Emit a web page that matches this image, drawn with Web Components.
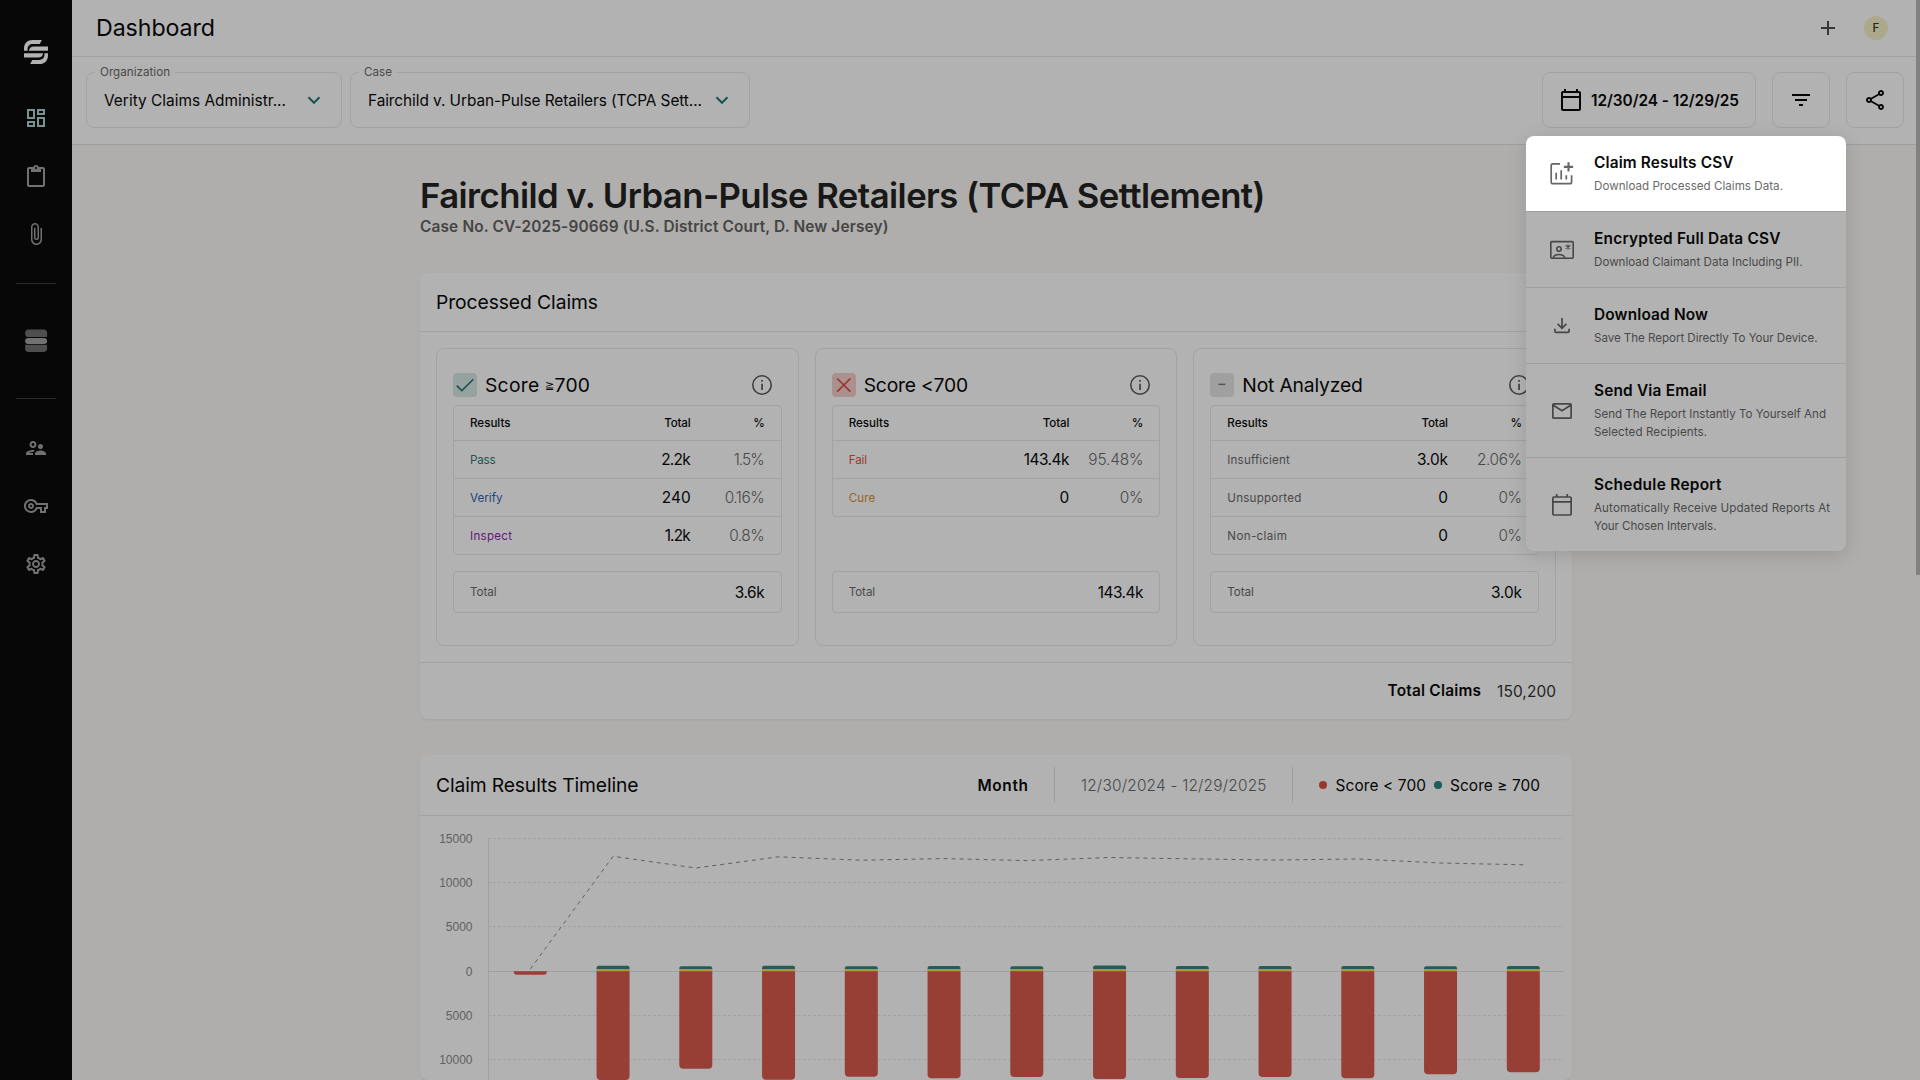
<!DOCTYPE html>
<html lang="en">
<head>
<meta charset="utf-8">
<title>Dashboard</title>
<style>
  html, body { margin: 0; height: 100%; }
  body {
    width: 1920px;
    height: 1080px;
    overflow: hidden;
    font-family: Inter, "Open Sans", sans-serif;
    font-size: 15.4px;
    color: #0a0a0a;
    background: #fbf9f6;
  }
</style>
</head>
<body>
<dash-app></dash-app>

<script>
const ICONS = {
  logo: '<path d="M17.8 0H8.6C3.4 0 0 3.4 0 8.600v2.100h3.600V9.400C3.600 6 5.600 4.100 9 4.100h6.800z"/><path d="M24 6.400H9.700C7 6.400 5.200 8 4.900 10.700H24z"/><path d="M6.200 24h9.200c5.200 0 8.600-3.400 8.600-8.600v-2.100h-3.600v1.300c0 3.400-2 5.300-5.400 5.300H8.200z"/><path d="M0 17.600h14.300c2.700 0 4.500-1.600 4.800-4.300H0z"/>',
  dashboard: '<path d="M19 5v2h-4V5h4M9 5v6H5V5h4m10 8v6h-4v-6h4M9 17v2H5v-2h4M21 3h-8v6h8V3zM11 3H3v10h8V3zm10 8h-8v10h8V11zm-10 4H3v6h8v-6z"/>',
  clipboard: '<path transform="translate(0 1)" d="M19 2h-4.180C14.400.84 13.300 0 12 0S9.600.84 9.180 2H5c-1.100 0-2 .9-2 2v16c0 1.100.9 2 2 2h14c1.100 0 2-.9 2-2V4c0-1.100-.9-2-2-2zm-7 0c.55 0 1 .45 1 1s-.45 1-1 1-1-.45-1-1 .45-1 1-1zm7 18H5V4h2v3h10V4h2v16z"/>',
  clip: '<path d="M16.500 6v11.500c0 2.210-1.790 4-4 4s-4-1.790-4-4V5a2.500 2.500 0 0 1 5 0v10.500c0 .55-.45 1-1 1s-1-.45-1-1V6H10v9.500a2.500 2.500 0 0 0 5 0V5c0-2.210-1.790-4-4-4S7 2.790 7 5v12.500c0 3.040 2.460 5.500 5.500 5.500s5.500-2.460 5.500-5.500V6h-1.500z"/>',
  stack: '<g transform="translate(.6 .1)"><g opacity=".68"><path d="M4 .5h15q3.500 0 3.500 3.500v4H4Q.5 8 .5 4.300.5.500 4 .500z"/><path d="M.5 15.700h22v3.300q0 4-3.500 4H4q-3.500 0-3.500-4z"/></g><rect x=".5" y="8.800" width="22" height="6.200" rx="3"/></g>',
  people: '<path d="M9 12c1.930 0 3.500-1.570 3.500-3.500S10.930 5 9 5 5.500 6.570 5.500 8.500 7.070 12 9 12zm0-5c.83 0 1.500.67 1.500 1.500S9.830 10 9 10s-1.500-.67-1.500-1.500S8.170 7 9 7zm.05 10H4.770c.99-.5 2.700-1 4.230-1 .11 0 .23.010.34.010.34-.73.93-1.330 1.640-1.810-.73-.13-1.420-.2-1.980-.2-2.340 0-7 1.170-7 3.500V19h7v-1.500c0-.17.020-.34.050-.5zm7.450-2.500c-1.840 0-5.500 1.010-5.500 3V19h11v-1.500c0-1.990-3.660-3-5.500-3zm1.210-1.820c.76-.43 1.290-1.240 1.290-2.180C19 9.120 17.880 8 16.500 8S14 9.120 14 10.500c0 .94.53 1.750 1.290 2.180.36.2.77.32 1.210.32s.85-.12 1.210-.32z"/>',
  key: '<path d="M22 19h-6v-4h-2.680c-1.140 2.420-3.600 4-6.320 4-3.860 0-7-3.140-7-7s3.140-7 7-7c2.720 0 5.170 1.580 6.320 4H24v6h-2v4zm-4-2h2v-4h2v-2H11.940l-.23-.67C11.010 8.340 9.110 7 7 7c-2.760 0-5 2.240-5 5s2.240 5 5 5c2.110 0 4.010-1.340 4.710-3.330l.23-.67H18v4zM7 15c-1.650 0-3-1.350-3-3s1.350-3 3-3 3 1.350 3 3-1.350 3-3 3zm0-4c-.55 0-1 .45-1 1s.45 1 1 1 1-.45 1-1-.45-1-1-1z"/>',
  gear: '<path d="M19.430 12.980c.04-.32.07-.64.07-.98 0-.34-.03-.66-.07-.98l2.110-1.650c.19-.15.24-.42.12-.64l-2-3.460c-.09-.16-.26-.25-.44-.25-.06 0-.12.010-.17.030l-2.490 1c-.52-.4-1.080-.73-1.690-.98l-.38-2.650C14.460 2.180 14.250 2 14 2h-4c-.25 0-.46.18-.49.42l-.38 2.650c-.61.25-1.170.59-1.690.98l-2.490-1c-.06-.02-.12-.03-.18-.03-.17 0-.34.09-.43.25l-2 3.460c-.13.22-.07.49.12.64l2.110 1.650c-.04.32-.07.65-.07.98 0 .33.03.66.07.98l-2.110 1.650c-.19.15-.24.42-.12.64l2 3.460c.09.16.26.25.44.25.06 0 .12-.01.17-.03l2.490-1c.52.4 1.080.73 1.690.98l.38 2.650c.03.24.24.42.49.42h4c.25 0 .46-.18.49-.42l.38-2.650c.61-.25 1.170-.59 1.690-.98l2.490 1c.06.02.12.03.18.03.17 0 .34-.09.43-.25l2-3.460c.12-.22.07-.49-.12-.64l-2.110-1.650zm-1.980-1.710c.04.31.05.52.05.73 0 .21-.02.43-.05.73l-.14 1.130.89.7 1.080.84-.7 1.210-1.270-.51-1.040-.42-.9.68c-.43.32-.84.56-1.250.73l-1.060.43-.16 1.130-.2 1.350h-1.400l-.19-1.350-.16-1.130-1.060-.43c-.43-.18-.83-.41-1.230-.71l-.91-.7-1.060.43-1.270.51-.7-1.210 1.080-.84.89-.7-.14-1.130c-.03-.31-.05-.54-.05-.74s.02-.43.05-.73l.14-1.130-.89-.7-1.080-.84.7-1.210 1.270.51 1.040.42.9-.68c.43-.32.84-.56 1.250-.73l1.060-.43.16-1.130.2-1.350h1.390l.19 1.350.16 1.130 1.060.43c.43.18.83.41 1.230.71l.91.7 1.060-.43 1.270-.51.7 1.210-1.070.85-.89.7.14 1.130zM12 8c-2.210 0-4 1.790-4 4s1.790 4 4 4 4-1.790 4-4-1.790-4-4-4zm0 6c-1.100 0-2-.9-2-2s.9-2 2-2 2 .9 2 2-.9 2-2 2z"/>',
  calendar: '<path d="M20 3h-1V1h-2v2H7V1H5v2H4c-1.100 0-2 .9-2 2v16c0 1.100.9 2 2 2h16c1.100 0 2-.9 2-2V5c0-1.100-.9-2-2-2zm0 18H4V10h16v11zm0-13H4V5h16v3z"/>',
  schedule: '<path fill="none" stroke="currentColor" stroke-width="1.700" d="M4 4h16q1.150 0 1.150 1.150v15.700q0 1.150-1.150 1.150H4q-1.150 0-1.150-1.150V5.150Q2.850 4 4 4zM2.850 8.900h18.300M6.700 1v3M17.300 1v3"/>',
  filter: '<path d="M10 18h4v-2h-4v2zM3 6v2h18V6H3zm3 7h12v-2H6v2z"/>',
  share: '<path d="M18 16.080c-.76 0-1.440.3-1.960.77L8.910 12.700c.05-.23.09-.46.09-.7s-.04-.47-.09-.7l7.050-4.110c.54.5 1.250.81 2.040.81 1.660 0 3-1.340 3-3s-1.340-3-3-3-3 1.340-3 3c0 .24.04.47.09.7L8.040 9.810C7.500 9.310 6.790 9 6 9c-1.660 0-3 1.340-3 3s1.340 3 3 3c.79 0 1.500-.31 2.040-.81l7.120 4.160c-.05.21-.08.43-.08.65 0 1.610 1.310 2.920 2.920 2.920s2.920-1.310 2.920-2.920-1.310-2.920-2.920-2.920zM18 4c.55 0 1 .45 1 1s-.45 1-1 1-1-.45-1-1 .45-1 1-1zM6 13c-.55 0-1-.45-1-1s.45-1 1-1 1 .45 1 1-.45 1-1 1zm12 7.020c-.55 0-1-.45-1-1s.45-1 1-1 1 .45 1 1-.45 1-1 1z"/>',
  info: '<circle cx="12" cy="12" r="9.200" fill="none" stroke="currentColor" stroke-width="1.600"/><path d="M11.200 6.900h1.700v1.900h-1.700zM11.200 10.700h1.700v6.400h-1.700z"/>',
  plus: '<path d="M11 5h2v6h6v2h-6v6h-2v-6H5v-2h6z"/>',
  chevron: '<path fill="none" stroke="currentColor" stroke-width="2" d="M6.500 9.300l5.500 5.500 5.500-5.500"/>',
  addchart: '<path fill="none" stroke="currentColor" stroke-width="1.700" d="M10 1.800H2.900Q1.200 1.800 1.200 3.500V20q0 1.700 1.700 1.700h17q1.700 0 1.700-1.700v-6.800M6.200 10.700v6.700M11.200 8.200v9.200M16.300 13.200v4.200"/><path fill="none" stroke="currentColor" stroke-width="2.100" d="M18.500.3v9.200M13.900 4.900h9.200"/>',
  idcard: '<g fill="none" stroke="currentColor" stroke-width="1.600"><rect x=".8" y="3.600" width="22.400" height="16.700" rx="1"/><circle cx="9" cy="11" r="2.200"/><path d="M3 19.800q1.500-3.300 6-3.300t6 3.300"/><path stroke-width="1.100" d="M18 6.200v5.600M15.500 7.600l5 2.800M20.500 7.600l-5 2.800"/></g>',
  download: '<path fill="none" stroke="currentColor" stroke-width="1.700" d="M12 4v10M7.600 9.900l4.400 4.400 4.400-4.400M4.900 14.700v2.500q0 1.200 1.200 1.200h11.800q1.200 0 1.200-1.200v-2.500"/>',
  mail: '<path fill="none" stroke="currentColor" stroke-width="1.700" d="M3.900 4.850h16.200q1.050 0 1.050 1v12.300q0 1-1.050 1H3.900q-1.050 0-1.050-1V5.850q0-1 1.050-1zM3 6l9 5.700L21 6"/>',
  check: '<path fill="none" stroke="currentColor" stroke-width="1.600" d="M3.800 12.600l5 5L20.400 6.300"/>',
  cross: '<path fill="none" stroke="currentColor" stroke-width="1.700" d="M5.200 5.500l13.200 13.200M18.400 5.500L5.200 18.700"/>',
  dash: '<path d="M8.400 10.600h7v1.500h-7z"/>'
};

class UiIcon extends HTMLElement {
  constructor() {
    super();
    this.attachShadow({ mode: 'open' });
  }

  connectedCallback() {
    this.shadowRoot.innerHTML = `
      <style>
        :host { display: block; flex: none; width: 24px; height: 24px; }
        svg { display: block; width: 100%; height: 100%; fill: currentColor; overflow: visible; }
      </style>
      <svg viewBox="0 0 24 24">${ICONS[this.getAttribute('name')] || ''}</svg>
    `;
  }
}

class DashSidebar extends HTMLElement {
  constructor() {
    super();
    this.attachShadow({ mode: 'open' });
    this.shadowRoot.innerHTML = `
      <style>
        :host {
          display: flex;
          flex-direction: column;
          align-items: center;
          box-sizing: border-box;
          padding-top: 40px;
          background: #0b0b0b;
          color: #a3a3a3;
        }
        .logo { color: #fff; margin-bottom: 42px; }
        .active { color: #acd3cf; }
        nav { display: flex; flex-direction: column; align-items: center; gap: 34px; }
        hr { width: 40px; height: 1px; border: 0; margin: 37px 0 45px; background: #3b3b3b; }
        hr.second { margin: 45px 0 37px; }
      </style>
      <ui-icon class="logo" name="logo"></ui-icon>
      <nav>
        <ui-icon class="active" name="dashboard"></ui-icon>
        <ui-icon name="clipboard"></ui-icon>
        <ui-icon name="clip"></ui-icon>
      </nav>
      <hr>
      <ui-icon name="stack"></ui-icon>
      <hr class="second">
      <nav>
        <ui-icon name="people"></ui-icon>
        <ui-icon name="key"></ui-icon>
        <ui-icon name="gear"></ui-icon>
      </nav>
    `;
  }
}

class DashHeader extends HTMLElement {
  constructor() {
    super();
    this.attachShadow({ mode: 'open' });
    this.shadowRoot.innerHTML = `
      <style>
        :host {
          display: flex;
          align-items: center;
          justify-content: space-between;
          box-sizing: border-box;
          height: 57px;
          padding: 0 32px 0 24px;
          border-bottom: 1px solid #e8e8e8;
          background: #fff;
        }
        .title { font-size: 23.2px; }
        .actions { display: flex; align-items: center; gap: 24px; color: #4f4f4f; }
        .avatar {
          width: 24px;
          height: 24px;
          border-radius: 50%;
          background: #f7f1c9;
          color: #333;
          font-size: 11.500px;
          font-weight: 500;
          line-height: 24px;
          text-align: center;
        }
      </style>
      <fit-text class="title" w="119"><slot></slot></fit-text>
      <div class="actions">
        <ui-icon name="plus"></ui-icon>
        <div class="avatar">F</div>
      </div>
    `;
  }
}

class SelectBox extends HTMLElement {
  constructor() {
    super();
    this.attachShadow({ mode: 'open' });
    this.shadowRoot.innerHTML = `
      <style>
        :host {
          display: flex;
          position: relative;
          align-items: center;
          justify-content: space-between;
          box-sizing: border-box;
          height: 56px;
          padding: 0 15px 0 17px;
          border: 1px solid #e8e8e8;
          border-radius: 8px;
        }
        .label {
          position: absolute;
          top: -9px;
          left: 8px;
          padding: 0 5px;
          background: #fff;
          color: #6a6a6a;
          font-size: 11.600px;
          line-height: 16px;
        }
        ui-icon { color: #1e7a73; }
      </style>
      <div class="label"><slot name="label"></slot></div>
      <slot></slot>
      <ui-icon name="chevron"></ui-icon>
    `;
  }
}

class ToolButton extends HTMLElement {
  constructor() {
    super();
    this.attachShadow({ mode: 'open' });
    this.shadowRoot.innerHTML = `
      <style>
        :host {
          display: flex;
          align-items: center;
          gap: 8px;
          box-sizing: border-box;
          height: 56px;
          padding: 0 16px;
          border: 1px solid #e8e8e8;
          border-radius: 8px;
          font-weight: 600;
        }
      </style>
      <slot></slot>
    `;
  }
}

class PanelCard extends HTMLElement {
  constructor() {
    super();
    this.attachShadow({ mode: 'open' });
    this.shadowRoot.innerHTML = `
      <style>
        :host {
          display: block;
          border-radius: 8px;
          background: #fff;
          box-shadow: 0 1px 2px rgba(0, 0, 0, 0.08);
        }
        header {
          display: flex;
          align-items: center;
          justify-content: space-between;
          box-sizing: border-box;
          height: var(--head, 59px);
          padding: 0 32px 0 16px;
          border-bottom: 1px solid #e8e8e8;
          font-size: 19.300px;
        }
      </style>
      <header><slot name="title"></slot><slot name="extra"></slot></header>
      <slot></slot>
    `;
  }
}

// Score box: the rows come in as JSON, one [label, width, colour, total, width, percent, width] each
class ScoreCard extends HTMLElement {
  constructor() {
    super();
    this.attachShadow({ mode: 'open' });
  }

  connectedCallback() {
    const rows = JSON.parse(this.getAttribute('rows'));
    const [total, totalWidth] = JSON.parse(this.getAttribute('total'));
    this.shadowRoot.innerHTML = `
      <style>
        :host {
          display: flex;
          flex-direction: column;
          box-sizing: border-box;
          height: 298px;
          padding: 24px 16px 32px;
          border: 1px solid #e8e8e8;
          border-radius: 8px;
        }
        .head { display: flex; align-items: center; height: 24px; margin-bottom: 8px; font-size: 19.300px; }
        .badge { margin-right: 8px; border-radius: 4px; color: var(--tone); background: var(--tint); }
        .info { margin-left: auto; margin-right: 8px; color: #5c5c5c; }
        .table, .total { border: 1px solid #e8e8e8; border-radius: 4px; }
        .row {
          display: grid;
          grid-template-columns: 1fr auto 74px;
          align-items: center;
          height: 37px;
          padding: 0 16px;
          border-top: 1px solid #e8e8e8;
          font-size: 11.600px;
        }
        .row.top { height: 34px; border-top: 0; font-weight: 500; }
        .row > :last-child { justify-self: end; }
        .num { font-size: 15.400px; }
        .pct { font-size: 15.400px; color: #6a6a6a; font-weight: 350; }
        .total {
          display: flex;
          align-items: center;
          justify-content: space-between;
          height: 40px;
          margin-top: auto;
          padding: 0 16px;
          font-size: 11.600px;
          color: #6a6a6a;
        }
        .total .num { color: #0a0a0a; }
      </style>
      <div class="head">
        <ui-icon class="badge" name="${this.getAttribute('badge')}"></ui-icon>
        <slot></slot>
        <ui-icon class="info" name="info"></ui-icon>
      </div>
      <div class="table">
        <div class="row top">
          <fit-text w="40.500">Results</fit-text>
          <fit-text w="26.500">Total</fit-text>
          <fit-text w="9">%</fit-text>
        </div>
        ${rows.map(([label, lw, color, num, nw, pct, pw]) => `
          <div class="row">
            <fit-text w="${lw}" style="color: ${color}">${label}</fit-text>
            <fit-text class="num" w="${nw}">${num}</fit-text>
            <fit-text class="pct" w="${pw}">${pct}</fit-text>
          </div>`).join('')}
      </div>
      <div class="total">
        <fit-text w="26.500">Total</fit-text>
        <fit-text class="num" w="${totalWidth}">${total}</fit-text>
      </div>
    `;
  }
}

class TimelineChart extends HTMLElement {
  constructor() {
    super();
    this.attachShadow({ mode: 'open' });
    const zero = 155.3;
    const bars = [
      [155.3, 158.7], [149.7, 263.9], [150.2, 252.8], [149.8, 263.8], [150.2, 260.8], [150, 262.2],
      [150.2, 260.9], [149.4, 263], [150, 262.1], [150, 261], [150, 262.2], [150.2, 258.2], [150, 256.2]
    ];
    const line = [153, 40.3, 52, 40.8, 44.2, 42.600, 44.600, 41.500, 42.900, 44, 43, 47, 48.800];
    const x = i => 110.3 + i * 82.75;
    const grid = [[22.5, '15000'], [66.5, '10000'], [110.500, '5000'], [155.500, '0'], [199.500, '5000'], [243.500, '10000']];

    this.shadowRoot.innerHTML = `
      <style>
        :host { display: block; height: 264px; overflow: hidden; }
        svg { display: block; }
        text { font: 12px "Liberation Sans", Arial, sans-serif; fill: #8b8b8b; text-anchor: end; }
        .grid { stroke: #e9e9e9; stroke-dasharray: 3 2; }
        .axis { stroke: #e6e6e6; }
        .trend { fill: none; stroke: #8a8a8a; stroke-dasharray: 4 4; }
      </style>
      <svg width="1152" height="264">
        ${grid.map(([y, label]) => `
          <line class="${label === '0' ? 'axis' : 'grid'}" x1="68" x2="1144" y1="${y}" y2="${y}"/>
          <text x="52.500" y="${y + 4}">${label}</text>`).join('')}
        <line class="axis" x1="68.500" x2="68.500" y1="22" y2="264"/>
        ${bars.map(([top, bottom], i) => {
          const left = x(i) - 16.5;
          const up = i === 0 ? '' : `
            <path fill="#36857e" d="M${left} 153V${top + 2}q0-2 2-2h29q2 0 2 2V153z"/>
            <rect fill="#efdb52" x="${left}" y="153" width="33" height="2.300"/>`;
          const r = i === 0 ? 3 : 4;
          return `${up}<path fill="#d9594d" d="M${left} ${zero}h33V${bottom - r}q0 ${r}-${r} ${r}h-${33 - r * 2}q-${r} 0-${r}-${r}z"/>`;
        }).join('')}
        <polyline class="trend" points="${line.map((y, i) => x(i) + ',' + y).join(' ')}"/>
      </svg>
    `;
  }
}

class MenuItem extends HTMLElement {
  constructor() {
    super();
    this.attachShadow({ mode: 'open' });
  }

  connectedCallback() {
    this.shadowRoot.innerHTML = `
      <style>
        :host {
          display: flex;
          align-items: center;
          gap: 20px;
          padding: 14px 12px 16px 24px;
          border-bottom: 1px solid #e4e4e4;
          font-size: 11.600px;
          line-height: 18px;
          color: #6a6a6a;
        }
        :host(:last-of-type) { border-bottom: 0; }
        .title { margin-bottom: 2px; font-size: 15.400px; line-height: 25px; font-weight: 600; color: #0a0a0a; }
        ui-icon { margin-top: 2px; color: #666; }
      </style>
      <ui-icon name="${this.getAttribute('icon')}"></ui-icon>
      <div>
        <div class="title"><slot name="title"></slot></div>
        <slot></slot>
      </div>
    `;
  }
}

class ReportMenu extends HTMLElement {
  constructor() {
    super();
    this.attachShadow({ mode: 'open' });
    this.shadowRoot.innerHTML = `
      <style>
        :host {
          display: block;
          width: 320px;
          border-radius: 8px;
          background: #fff;
          box-shadow: 0 4px 20px rgba(0, 0, 0, 0.13);
        }
        /* dims everything but the first entry */
        .spotlight {
          position: absolute;
          top: 0;
          left: 0;
          width: 320px;
          height: 75px;
          border-radius: 8px 8px 0 0;
          box-shadow: 0 0 0 9999px rgba(0, 0, 0, 0.3);
          pointer-events: none;
        }
      </style>
      <slot></slot>
      <div class="spotlight"></div>
    `;
  }
}

class DashApp extends HTMLElement {
  constructor() {
    super();
    this.attachShadow({ mode: 'open' });
    this.shadowRoot.innerHTML = `
      <style>
        :host {
          display: grid;
          position: relative;
          grid-template-columns: 72px 1fr;
          width: 1920px;
          height: 1080px;
          overflow: hidden;
        }
        .toolbar {
          display: flex;
          gap: 8px;
          box-sizing: border-box;
          height: 88px;
          padding: 15px 16px 0 14px;
          border-bottom: 1px solid #e2e2e2;
          background: #fff;
        }
        .org { width: 256px; }
        .case { width: 400px; }
        .tools { display: flex; gap: 16px; margin-left: auto; }
        main { width: 1152px; margin: 0 auto; padding-top: 30px; box-sizing: border-box; }
        h1 { margin: 0 0 1px; font-size: 34.700px; font-weight: 600; line-height: 40px; color: #232323; }
        .court { margin-bottom: 35px; line-height: 22px; font-size: 15.400px; font-weight: 600; color: #646464; }
        .scores { display: grid; grid-template-columns: repeat(3, 1fr); gap: 16px; padding: 16px; }
        .sum {
          display: flex;
          align-items: center;
          justify-content: flex-end;
          gap: 16px;
          height: 56px;
          padding: 0 16px;
          border-top: 1px solid #e8e8e8;
        }
        .sum b { font-weight: 600; margin-top: -2px; }
        .sum .value { color: #333; margin-top: 1px; }
        .gte { font: 11px "DejaVu Sans", sans-serif; vertical-align: 3px; line-height: 0; }
        .timeline { margin-top: 36px; --head: 61px; }
        .extra { display: flex; align-items: center; font-size: 15.400px; }
        .extra b { font-weight: 600; }
        .extra .range { color: #6a6a6a; font-weight: 350; }
        .rule { width: 1px; height: 36px; margin: 0 26px; background: #e3e3e3; }
        .dot { width: 8px; height: 8px; margin-right: 8px; border-radius: 50%; }
        report-menu { position: absolute; top: 136px; left: 1526px; z-index: 2; }
        .thumb { position: absolute; top: 0; right: 0; width: 4px; height: 575px; background: #b9b9b9; }
      </style>
      <dash-sidebar></dash-sidebar>
      <div>
        <dash-header>Dashboard</dash-header>
        <div class="toolbar">
          <select-box class="org">
            <fit-text slot="label" w="70">Organization</fit-text>
            <fit-text w="182">Verity Claims Administr...</fit-text>
          </select-box>
          <select-box class="case">
            <fit-text slot="label" w="28">Case</fit-text>
            <fit-text w="334">Fairchild v. Urban-Pulse Retailers (TCPA Sett...</fit-text>
          </select-box>
          <div class="tools">
            <tool-button><ui-icon name="calendar"></ui-icon><fit-text w="148">12/30/24 - 12/29/25</fit-text></tool-button>
            <tool-button><ui-icon name="filter"></ui-icon></tool-button>
            <tool-button><ui-icon name="share"></ui-icon></tool-button>
          </div>
        </div>
        <main>
          <h1><fit-text w="845.500">Fairchild v. Urban-Pulse Retailers (TCPA Settlement)</fit-text></h1>
          <div class="court"><fit-text w="468.500">Case No. CV-2025-90669 (U.S. District Court, D. New Jersey)</fit-text></div>
          <panel-card>
            <fit-text slot="title" w="162">Processed Claims</fit-text>
            <div class="scores">
              <score-card badge="check" style="--tone: #1e7a73; --tint: #d6e8e5" total='["3.6k", 30]'
                rows='[["Pass", 25.5, "#2a7d73", "2.2k", 29.5, "1.5%", 31], ["Verify", 32.5, "#2d66b5", "240", 29, "0.16%", 40], ["Inspect", 42, "#9127b0", "1.2k", 26, "0.8%", 35.5]]'>
                <fit-text w="105">Score <span class="gte">≧</span>700</fit-text>
              </score-card>
              <score-card badge="cross" style="--tone: #dc4f44; --tint: #f5cfcc" total='["143.4k", 45.5]'
                rows='[["Fail", 18.5, "#dc4f44", "143.4k", 45.5, "95.48%", 55], ["Cure", 26.5, "#dc902c", "0", 10, "0%", 23.5]]'>
                <fit-text w="104.500">Score &lt;700</fit-text>
              </score-card>
              <score-card badge="dash" style="--tone: #777; --tint: #e6e6e6" total='["3.0k", 31]'
                rows='[["Insufficient", 62.5, "#6a6a6a", "3.0k", 31, "2.06%", 45], ["Unsupported", 74, "#6a6a6a", "0", 10, "0%", 23.5], ["Non-claim", 59.5, "#6a6a6a", "0", 10, "0%", 23.5]]'>
                <fit-text w="120.500">Not Analyzed</fit-text>
              </score-card>
            </div>
            <div class="sum">
              <b><fit-text w="93.500">Total Claims</fit-text></b>
              <fit-text class="value" w="59">150,200</fit-text>
            </div>
          </panel-card>
          <panel-card class="timeline">
            <fit-text slot="title" w="202.500">Claim Results Timeline</fit-text>
            <div slot="extra" class="extra">
              <b><fit-text w="50.500">Month</fit-text></b>
              <div class="rule"></div>
              <fit-text class="range" w="185.500">12/30/2024 - 12/29/2025</fit-text>
              <div class="rule"></div>
              <div class="dot" style="background: #dc4f44"></div>
              <fit-text w="90.500" style="margin-right: 8px">Score &lt; 700</fit-text>
              <div class="dot" style="background: #2a857d"></div>
              <fit-text w="90">Score ≥ 700</fit-text>
            </div>
            <timeline-chart></timeline-chart>
          </panel-card>
        </main>
      </div>
      <div class="thumb"></div>
      <report-menu>
        <menu-item icon="addchart">
          <fit-text slot="title" w="139.500">Claim Results CSV</fit-text>
          <fit-text w="189">Download Processed Claims Data.</fit-text>
        </menu-item>
        <menu-item icon="idcard">
          <fit-text slot="title" w="186.500">Encrypted Full Data CSV</fit-text>
          <fit-text w="208.500">Download Claimant Data Including PII.</fit-text>
        </menu-item>
        <menu-item icon="download">
          <fit-text slot="title" w="114">Download Now</fit-text>
          <fit-text w="223.500">Save The Report Directly To Your Device.</fit-text>
        </menu-item>
        <menu-item icon="mail">
          <fit-text slot="title" w="112.500">Send Via Email</fit-text>
          <fit-text w="232">Send The Report Instantly To Yourself And</fit-text><br>
          <fit-text w="113">Selected Recipients.</fit-text>
        </menu-item>
        <menu-item icon="schedule">
          <fit-text slot="title" w="127.500">Schedule Report</fit-text>
          <fit-text w="236">Automatically Receive Updated Reports At</fit-text><br>
          <fit-text w="122.500">Your Chosen Intervals.</fit-text>
        </menu-item>
      </report-menu>
    `;
  }
}

// Single line of text, tracked so that it fills the width given in "w"
class FitText extends HTMLElement {
  constructor() {
    super();
    this.attachShadow({ mode: 'open' });
    this.shadowRoot.innerHTML = `
      <style>
        :host { display: inline-block; white-space: nowrap; }
        span { display: inline-block; }
      </style>
      <span><slot></slot></span>
    `;
  }

  connectedCallback() {
    const span = this.shadowRoot.querySelector('span');
    const target = parseFloat(this.getAttribute('w'));
    let text = this.textContent;
    const slot = this.querySelector('slot');
    if (slot) text = slot.assignedNodes().map(n => n.textContent).join('');
    const gaps = text.trim().length - 1;
    const natural = span.getBoundingClientRect().width;
    if (gaps < 1 || !natural) return;
    const spacing = (target - natural) / gaps;
    span.style.letterSpacing = spacing + 'px';
    span.style.marginRight = -spacing + 'px';
  }
}

customElements.define('ui-icon', UiIcon);
customElements.define('dash-sidebar', DashSidebar);
customElements.define('dash-header', DashHeader);
customElements.define('select-box', SelectBox);
customElements.define('tool-button', ToolButton);
customElements.define('panel-card', PanelCard);
customElements.define('score-card', ScoreCard);
customElements.define('timeline-chart', TimelineChart);
customElements.define('menu-item', MenuItem);
customElements.define('report-menu', ReportMenu);
customElements.define('dash-app', DashApp);
customElements.define('fit-text', FitText);
</script>
</body>
</html>
